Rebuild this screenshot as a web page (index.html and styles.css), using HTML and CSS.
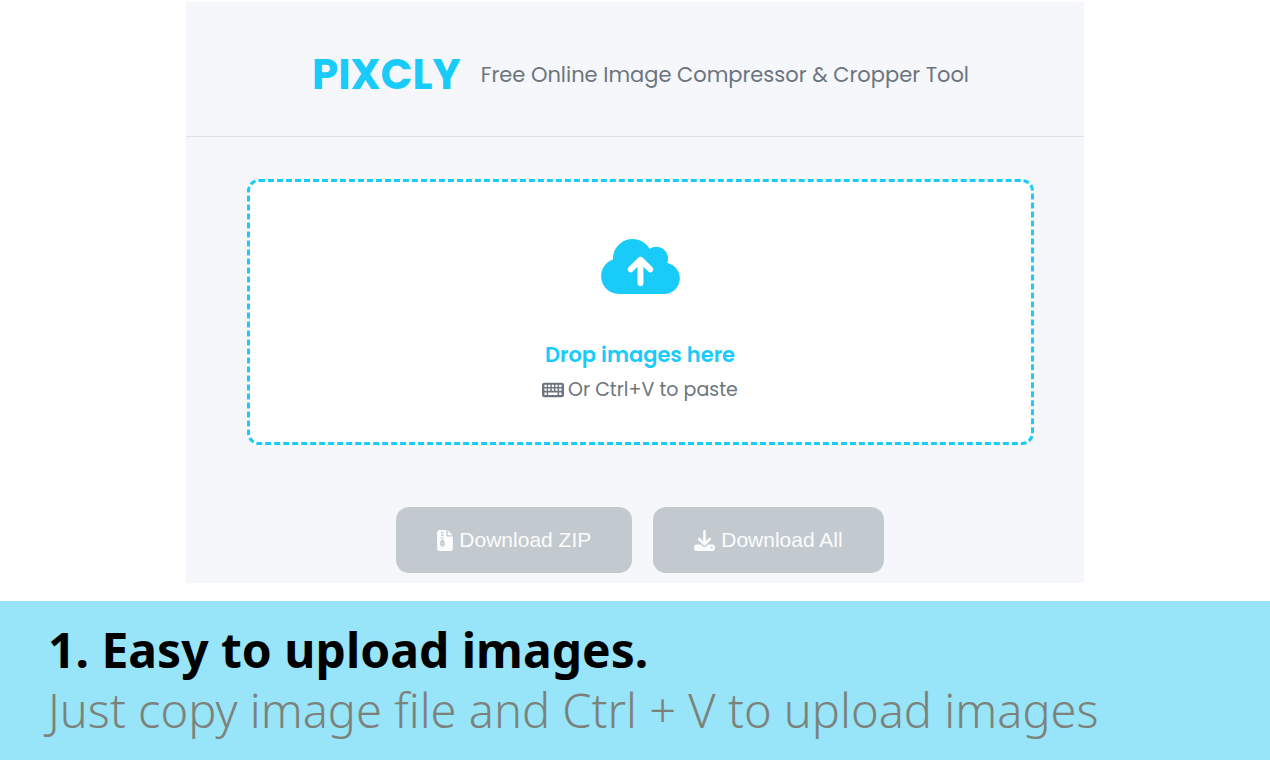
FILE: index.html
```html
<!DOCTYPE html>
<html lang="en">
<head>
<meta charset="UTF-8">
<meta name="viewport" content="width=device-width, initial-scale=1.0">
<title>PIXCLY</title>
<link rel="stylesheet" href="styles.css">
</head>
<body>

<main class="app">
  <header class="header">
    <h1 class="logo">PIXCLY</h1>
    <p class="tagline">Free Online Image Compressor &amp; Cropper Tool</p>
  </header>

  <!-- Drop area -->
  <section class="dropZone">
    <svg class="cloudIcon" viewBox="0 0 640 512" aria-hidden="true"><path d="M144 480C64.5 480 0 415.5 0 336c0-62.8 40.2-116.2 96.2-135.9c-.1-2.7-.2-5.4-.2-8.1c0-88.4 71.6-160 160-160c59.3 0 111 32.2 138.7 80.2C409.9 102 428.3 96 448 96c53 0 96 43 96 96c0 12.2-2.3 23.8-6.4 34.6C596 238.4 640 290.1 640 352c0 70.7-57.3 128-128 128H144zm79-217c-9.4 9.4-9.4 24.6 0 33.9s24.6 9.4 33.9 0l39-39V392c0 13.3 10.7 24 24 24s24-10.7 24-24V257.9l39 39c9.4 9.4 24.6 9.4 33.9 0s9.4-24.6 0-33.9l-80-80c-9.4-9.4-24.6-9.4-33.9 0l-80 80z"/></svg>
    <p class="dropTitle">Drop images here</p>
    <p class="dropHint">
      <svg class="keyboardIcon" viewBox="0 64 576 384" aria-hidden="true"><path fill-rule="evenodd" d="M64 64h448a64 64 0 0 1 64 64v256a64 64 0 0 1-64 64H64a64 64 0 0 1-64-64V128a64 64 0 0 1 64-64zM64 120v56h60v-56zM160 120v56h56v-56zM256 120v56h56v-56zM352 120v56h56v-56zM448 120v56h64v-56zM64 216v60h60v-60zM160 216v60h56v-60zM256 216v60h56v-60zM352 216v60h56v-60zM448 216v60h64v-60zM64 324v60h60v-60zM160 324v60h248v-60zM448 324v60h64v-60z"/></svg>
      Or Ctrl+V to paste
    </p>
  </section>

  <div class="actions">
    <button type="button" class="downloadButton" disabled>
      <svg class="zipIcon" viewBox="0 0 384 512" aria-hidden="true"><path fill-rule="evenodd" d="M64 0C28.700 0 0 28.700 0 64v384c0 35.300 28.700 64 64 64h256c35.300 0 64-28.700 64-64V160H256c-17.700 0-32-14.300-32-32V0zM256 0v128h128zM96 48h64v32H96zM96 112h64v32H96zM96 176h64v32H96zM96 240h64l24 84c12 44-16 76-56 76s-68-32-56-76zM112 320v32h32v-32z"/></svg>
      Download ZIP
    </button>
    <button type="button" class="downloadButton" disabled>
      <svg class="saveIcon" viewBox="0 0 512 512" aria-hidden="true"><path d="M288 32c0-17.700-14.300-32-32-32s-32 14.300-32 32v242.700l-73.400-73.400c-12.500-12.500-32.800-12.500-45.300 0s-12.500 32.800 0 45.300l128 128c12.500 12.500 32.800 12.500 45.300 0l128-128c12.500-12.500 12.500-32.800 0-45.300s-32.800-12.500-45.300 0L288 274.700V32zM64 352c-35.300 0-64 28.700-64 64v32c0 35.300 28.700 64 64 64h384c35.300 0 64-28.700 64-64v-32c0-35.300-28.700-64-64-64H346.500l-45.300 45.300c-25 25-65.500 25-90.500 0L165.500 352H64zm368 56a24 24 0 1 1 0 48 24 24 0 1 1 0-48z"/></svg>
      Download All
    </button>
  </div>
</main>

<section class="banner">
  <h2 class="bannerTitle">1. Easy to upload images.</h2>
  <p class="bannerText">Just copy image file and Ctrl + V to upload images</p>
</section>

</body>
</html>
```
FILE: styles.css
```css
* {
  box-sizing: border-box;
}

body {
  margin: 0;
  min-height: 100vh;
  display: flex;
  flex-direction: column;
  background-color: #ffffff;
  font-family: Poppins, Inter, sans-serif;
}

h1, h2, p {
  margin: 0;
}

svg {
  fill: currentColor;
  flex: none;
}

.app {
  width: 92%;
  max-width: 898px;
  margin: 2px auto 18px;
  padding-bottom: 10px;
  background-color: #f5f7fb;
}

.header {
  display: flex;
  flex-wrap: wrap;
  justify-content: center;
  align-items: center;
  gap: 20px;
  padding: 48px 50px 36px 61px;
  border-bottom: 1px solid #dee2e6;
}

.logo {
  font-size: 42px;
  line-height: 50px;
  font-weight: 700;
  color: #19cbf9; /* Brand cyan */
}

.tagline {
  font-size: 21px;
  line-height: 32px;
  color: #6c757d;
}

/* Dashed upload box */
.dropZone {
  display: flex;
  flex-direction: column;
  align-items: center;
  margin: 42px 50px 62px 61px;
  padding: 53px 21px 36px 20px;
  border: 3px dashed #19cbf9;
  border-radius: 12px;
  background-color: #ffffff;
}

.cloudIcon {
  width: 79px;
  height: 63px;
  margin-bottom: 41px;
  color: #19cbf9;
}

.dropTitle {
  font-size: 21px;
  line-height: 32px;
  font-weight: 600;
  color: #19cbf9;
}

.dropHint {
  display: flex;
  align-items: center;
  gap: 4px;
  margin-top: 3px;
  font-size: 19px;
  line-height: 32px;
  color: #6c757d;
}

.keyboardIcon {
  width: 22px;
  height: 16px;
}

.actions {
  display: flex;
  flex-wrap: wrap;
  justify-content: center;
  gap: 21px;
  padding: 0 51px 0 61px;
}

.downloadButton {
  display: flex;
  align-items: center;
  gap: 6px;
  padding: 17px 41px;
  border: none;
  border-radius: 13px;
  background-color: #c3cacf; /* Disabled grey */
  color: #fbfcfd;
  font-family: "Liberation Sans", Arial, sans-serif;
  font-size: 21px;
  line-height: 32px;
}

.zipIcon {
  width: 16px;
  height: 21px;
}

.saveIcon {
  width: 21px;
  height: 21px;
}

/* Caption strip */
.banner {
  flex: 1;
  padding: 19px 48px;
  background-color: #98e4f9;
  font-family: "Noto Sans", "Open Sans", sans-serif;
}

.bannerTitle {
  font-size: 48px;
  line-height: 60px;
  font-weight: 700;
  color: #000000;
}

.bannerText {
  font-size: 47px;
  line-height: 60px;
  font-weight: 300;
  color: #7c8279;
}
```
